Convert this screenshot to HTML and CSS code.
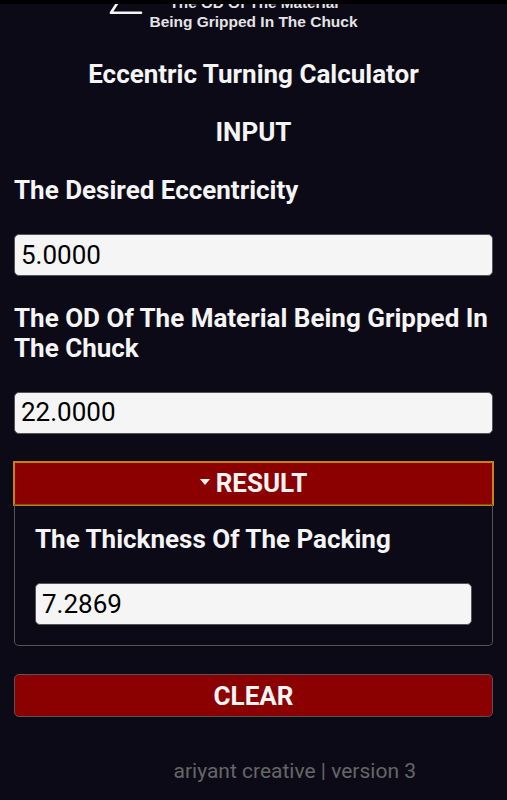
FILE: index.html
```html
<!DOCTYPE html>
<html lang="en">
<head>
  <meta charset="UTF-8">
  <meta name="viewport" content="width=device-width, initial-scale=1.0">
  <title>Eccentric Turning Calculator</title>
  <link rel="stylesheet" href="styles.css">
</head>
<body>
  <svg class="diagram" viewBox="0 0 507 27" width="507" height="27">
    <path d="M118 -2L111 8.8H141" fill="none" stroke="#f5f5f5" stroke-width="2.6" stroke-linecap="round" stroke-linejoin="round"/>
    <text x="254" y="4.4" text-anchor="middle" textLength="169" lengthAdjust="spacingAndGlyphs">The OD Of The Material</text>
    <text x="253.5" y="22.5" text-anchor="middle" textLength="208" lengthAdjust="spacingAndGlyphs">Being Gripped In The Chuck</text>
  </svg>

  <div class="calculator">
    <h1>Eccentric Turning Calculator</h1>
    <h2>INPUT</h2>

    <label for="eccentricity">The Desired Eccentricity</label>
    <input type="text" id="eccentricity" value="5.0000">

    <label for="diameter">The OD Of The Material Being Gripped In The Chuck</label>
    <input type="text" id="diameter" value="22.0000">

    <details class="result" open>
      <summary><span class="arrow"></span>RESULT</summary>
      <div class="panel">
        <label for="packing">The Thickness Of The Packing</label>
        <input type="text" id="packing" value="7.2869" readonly>
      </div>
    </details>

    <button type="button" class="clear">CLEAR</button>
  </div>

  <footer>ariyant creative | version 3</footer>
</body>
</html>
```

FILE: styles.css
```css
* {
  box-sizing: border-box;
}

body {
  margin: 0;
  border-top: 4px solid #000;
  height: 800px;
  overflow: hidden;
  background: #0d0a18;
  color: #f5f5f5;
  font-family: Roboto, sans-serif;
  font-size: 26px;
  line-height: 30px;
}

.diagram {
  display: block;
  overflow: hidden;
}

.diagram text {
  font-family: "Liberation Sans", Arial, sans-serif;
  font-size: 15px;
  font-weight: bold;
  fill: #e4e4e6;
}

.calculator {
  display: flex;
  flex-direction: column;
  gap: 28px;
  padding: 28px 14px 0;
}

h1, h2 {
  margin: 0;
  font-size: 26px;
  font-weight: bold;
  text-align: center;
}

label {
  display: block;
  font-weight: bold;
}

input {
  display: block;
  width: 100%;
  height: 42px;
  padding: 0 6px;
  border: 1px solid #555;
  border-radius: 5px;
  background: #f5f5f5;
  color: #000;
  font-family: inherit;
  font-size: 26px;
}

#eccentricity {
  margin: 1px 0 -1px;
}

#diameter {
  margin-top: 1px;
  padding-bottom: 2px;
}

summary {
  display: flex;
  align-items: center;
  justify-content: center;
  height: 43px;
  padding-bottom: 2px;
  border: 1px solid #c8820a;
  border-bottom-color: #7a5218;
  background: #8b0000;
  outline: none;
  box-shadow: 0 0 0 1px #c8820a;
  font-weight: bold;
  list-style: none;
  cursor: pointer;
}

.arrow {
  margin: 0 6px 2px 0;
  border: 5px solid transparent;
  border-top: 6px solid #f5f5f5;
  border-bottom: 0;
}

.panel {
  display: flex;
  flex-direction: column;
  gap: 29px;
  padding: 19px 20px 20px;
  border: 1px solid #555;
  border-top: 0;
  border-radius: 0 0 5px 5px;
}

.clear {
  height: 43px;
  padding: 0;
  border: 1px solid #555;
  border-radius: 5px;
  background: #8b0000;
  color: #f5f5f5;
  font: bold 26px Roboto, sans-serif;
}

footer {
  margin-top: 39px;
  padding-right: 91px;
  color: #666;
  font-size: 21px;
  text-align: right;
}
```
